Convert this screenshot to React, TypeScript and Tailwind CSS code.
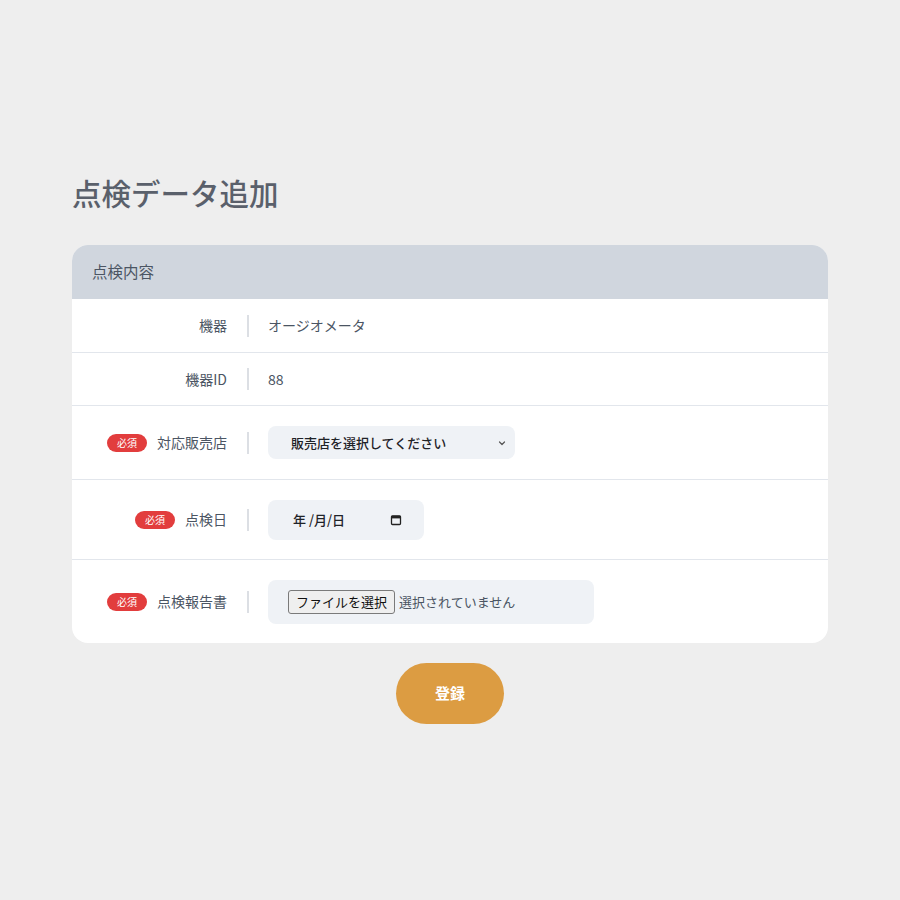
const font = { fontFamily: '"Noto Sans CJK JP", "Noto Sans", sans-serif' }

function Required() {
  return (
    <span className="inline-flex h-[18px] w-10 items-center justify-center rounded-full bg-[#e23d3d] text-[10px] leading-none text-white">
      必須
    </span>
  )
}

function Row({
  label,
  required,
  height,
  last,
  children,
}: {
  label: string
  required?: boolean
  height: string
  last?: boolean
  children: React.ReactNode
}) {
  return (
    <div className={`flex items-center ${height} ${last ? "" : "border-b border-[#e2e6ec]"}`}>
      <div className="flex w-[155px] items-center justify-end gap-[10px]">
        {required && <Required />}
        <span className="text-[14px] text-[#4b5563]">{label}</span>
      </div>
      <div className="ml-5 h-[22px] w-[2px] bg-[#dcdfe4]"></div>
      <div className="ml-[19px] flex items-center text-[14px] text-[#4b5563]">{children}</div>
    </div>
  )
}

export default function App() {
  return (
    <div className="min-h-[900px] bg-[#eeeeee]" style={font}>
      <div className="mx-auto w-[756px] pt-[172px]">
        {/* Title */}
        <h1 className="mb-8 text-[29.5px] font-medium leading-[41px] text-[#5a606b]">点検データ追加</h1>

        {/* Card */}
        <div className="overflow-hidden rounded-2xl bg-white">
          <div className="flex h-[54px] items-center bg-[#d0d6de] px-5 text-[15.5px] text-[#4b5563]">点検内容</div>

          <Row label="機器" height="h-[54px]">
            オージオメータ
          </Row>
          <Row label="機器ID" height="h-[53px]">
            88
          </Row>
          <Row label="対応販売店" required height="h-[74px]">
            <div className="flex h-[33px] w-[247px] items-center justify-between rounded-lg bg-[#eff2f6] pl-[23px] pr-[8px]">
              <span className="text-[13px] font-medium text-[#1f2328]">販売店を選択してください</span>
              <svg width="10" height="10" viewBox="0 0 10 10" fill="none">
                <path d="M2.5 4 L5 6.5 L7.5 4" stroke="#555" strokeWidth="1.2" strokeLinecap="round" strokeLinejoin="round" />
              </svg>
            </div>
          </Row>
          <Row label="点検日" required height="h-[80px]">
            <div className="flex h-10 w-[156px] items-center rounded-lg bg-[#eff2f6] pl-[25px] pr-[22px]">
              <span className="flex-1 text-[13px] font-medium text-[#1f2328]">年 /月/日</span>
              <svg width="12" height="12" viewBox="0 0 12 12" fill="none">
                <rect x="1.5" y="1.8" width="9" height="8.7" rx="1" stroke="#222" strokeWidth="1.3" />
                <rect x="1.5" y="1.8" width="9" height="2.6" fill="#222" />
              </svg>
            </div>
          </Row>
          <Row label="点検報告書" required height="h-[83px]" last>
            <div className="flex h-11 w-[326px] items-center rounded-lg bg-[#eff2f6] pl-5">
              <span className="inline-flex h-6 items-center rounded-[3px] border border-[#7a7a7a] bg-[#efefef] px-[7px] text-[13px] text-[#111]">
                ファイルを選択
              </span>
              <span className="ml-[4px] text-[13px] text-[#4b5563]">選択されていません</span>
            </div>
          </Row>
        </div>

        {/* Submit */}
        <div className="mt-5 flex justify-center">
          <button className="h-[61px] w-[108px] rounded-full bg-[#dc9c42] text-[15px] font-bold text-white">登録</button>
        </div>
      </div>
    </div>
  )
}
